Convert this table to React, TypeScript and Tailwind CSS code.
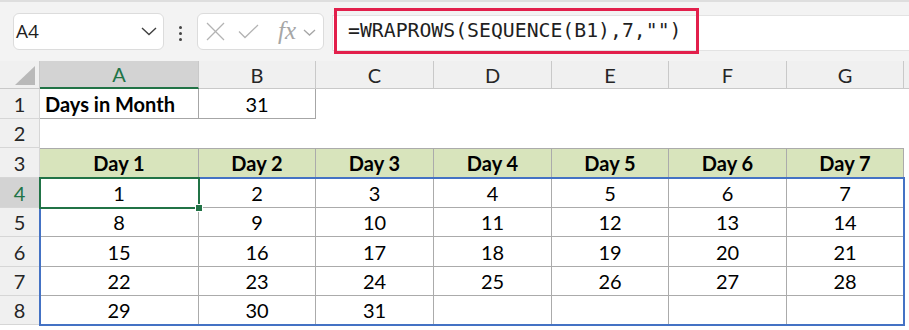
import React from 'react';

const COLS = ['A', 'B', 'C', 'D', 'E', 'F', 'G'];
const GRID = 'grid grid-cols-[40px_159px_117px_118px_118px_117px_118px_117px_1fr] grid-rows-[28px_30px_29px_30px_30px_29px_30px_29px_29px_1fr]';

// 31 days wrapped into rows of 7, padded with ""
const days: (number | '')[][] = [];
for (let r = 0; r < 5; r++) {
  const row: (number | '')[] = [];
  for (let c = 0; c < 7; c++) {
    const n = r * 7 + c + 1;
    row.push(n <= 31 ? n : '');
  }
  days.push(row);
}

function Toolbar() {
  return (
    <div className="h-[61px] flex items-start bg-[#f3f3f3] border-t-2 border-[#dedede] pl-[13px]">
      {/* Name box */}
      <div className="mt-[11px] w-[151px] h-[37px] bg-white border border-[#dcdcdc] rounded-[6px] flex items-center justify-between pl-[2px] pr-[6px]">
        <span className="text-[19px] text-[#1f1f1f] font-['Open_Sans',sans-serif]">A4</span>
        <svg width="16" height="9" viewBox="0 0 16 9" fill="none" stroke="#404040" strokeWidth="1.4">
          <polyline points="1,1 8,7.5 15,1" />
        </svg>
      </div>

      {/* Dots */}
      <div className="mt-[24px] ml-[15px] flex flex-col gap-[3px]">
        <span className="w-[3px] h-[3px] rounded-full bg-[#444]" />
        <span className="w-[3px] h-[3px] rounded-full bg-[#444]" />
        <span className="w-[3px] h-[3px] rounded-full bg-[#444]" />
      </div>

      {/* Cancel / Enter / fx */}
      <div className="mt-[11px] ml-[15px] w-[127px] h-[37px] bg-white border border-[#dcdcdc] rounded-[6px] flex items-center pl-[8px]">
        <svg width="19" height="19" viewBox="0 0 19 19" fill="none" stroke="#b3b3b3" strokeWidth="1.3">
          <line x1="1" y1="1" x2="18" y2="18" />
          <line x1="18" y1="1" x2="1" y2="18" />
        </svg>
        <svg className="ml-[13px]" width="21" height="15" viewBox="0 0 21 15" fill="none" stroke="#b3b3b3" strokeWidth="1.3">
          <polyline points="1,7.5 7,13.5 20,1" />
        </svg>
        <span className="ml-[19px] -mt-[2px] text-[25px] leading-none italic text-[#a6a6a6] font-['Liberation_Serif',serif]">fx</span>
        <svg className="ml-[7px] mt-[2px]" width="13" height="7" viewBox="0 0 13 7" fill="none" stroke="#a6a6a6" strokeWidth="1.3">
          <polyline points="1,1 6.5,6 12,1" />
        </svg>
      </div>

      {/* Formula bar */}
      <div className="mt-[13px] ml-[8px] flex-1 h-[36px] bg-white border-y border-l border-[#e3e3e3] flex items-start">
        <div className="-mt-[8px] ml-[1px] w-[365px] h-[46px] border-[3px] border-[#e21f4b] flex items-center pl-[11px]">
          <span className="text-[19.8px] text-[#1f1f1f] font-['DejaVu_Sans_Mono',monospace] whitespace-pre">
            =WRAPROWS(SEQUENCE(B1),7,"")
          </span>
        </div>
      </div>
    </div>
  );
}

function Sheet() {
  const hdr = 'flex items-center justify-center border-r border-b border-[#c9c9c9] bg-[#f0f0f0] text-[#262626]';
  const rowHdr = 'flex items-center justify-center border-r border-b border-[#d6d6d6] bg-[#f0f0f0] text-[#262626]';
  const tbl = 'flex items-center justify-center border-r border-b border-[#ababab] text-black';

  return (
    <div className="grid text-[20px] font-['Lato',sans-serif]">
      {/* Cells */}
      <div className={`${GRID} col-start-1 row-start-1`}>
        {/* Column headers */}
        <div className="relative bg-[#f0f0f0] border-r border-b border-[#c9c9c9]">
          <svg className="absolute right-[4px] bottom-[3px]" width="20" height="19" viewBox="0 0 20 19">
            <polygon points="20,0 20,19 0,19" fill="#b9b9b9" />
          </svg>
        </div>
        {COLS.map((c) =>
          c === 'A' ? (
            <div key={c} className="flex items-center justify-center border-r border-[#c9c9c9] border-b-2 border-b-[#217346] bg-[#d3d3d3] text-[#217346]">
              A
            </div>
          ) : (
            <div key={c} className={hdr}>{c}</div>
          )
        )}
        <div className="bg-[#f0f0f0] border-b border-[#c9c9c9]" />

        {/* Row 1 */}
        <div className={rowHdr}>1</div>
        <div className="flex items-center pl-[5px] font-bold border-r border-b border-[#a6a6a6] text-black">Days in Month</div>
        <div className="flex items-center justify-center border-r border-b border-[#a6a6a6] text-black">31</div>
        <div /><div /><div /><div /><div /><div />

        {/* Row 2 */}
        <div className={rowHdr}>2</div>
        <div /><div /><div /><div /><div /><div /><div /><div />

        {/* Row 3: table header */}
        <div className={rowHdr}>3</div>
        {COLS.map((c, i) => (
          <div key={c} className={`${tbl} border-t bg-[#d8e4bc] font-bold`}>Day {i + 1}</div>
        ))}
        <div />

        {/* Rows 4-8 */}
        {days.map((row, r) => (
          <React.Fragment key={r}>
            <div className={r === 0 ? 'flex items-center justify-center border-r border-b border-[#d6d6d6] bg-[#d3d3d3] text-[#217346]' : rowHdr}>
              {r + 4}
            </div>
            {row.map((v, c) => (
              <div key={c} className={tbl}>{v}</div>
            ))}
            <div />
          </React.Fragment>
        ))}

        {/* Row 9 (cut off) */}
        <div className="bg-[#f0f0f0] border-r border-[#d6d6d6]" />
      </div>

      {/* Highlights layered above the cells */}
      <div className={`${GRID} col-start-1 row-start-1 pointer-events-none`}>
        <div className="col-start-2 col-end-9 row-start-5 row-end-10 -m-[1px] border-2 border-[#4472c4]" />
        <div className="relative col-start-2 row-start-5 -m-[1px] border-2 border-[#217346]">
          <span className="absolute -right-[5px] -bottom-[5px] w-[8px] h-[8px] bg-[#217346] border border-white" />
        </div>
      </div>
    </div>
  );
}

export default function App() {
  return (
    <div className="w-[909px] h-[330px] overflow-hidden bg-white">
      <Toolbar />
      <Sheet />
    </div>
  );
}
